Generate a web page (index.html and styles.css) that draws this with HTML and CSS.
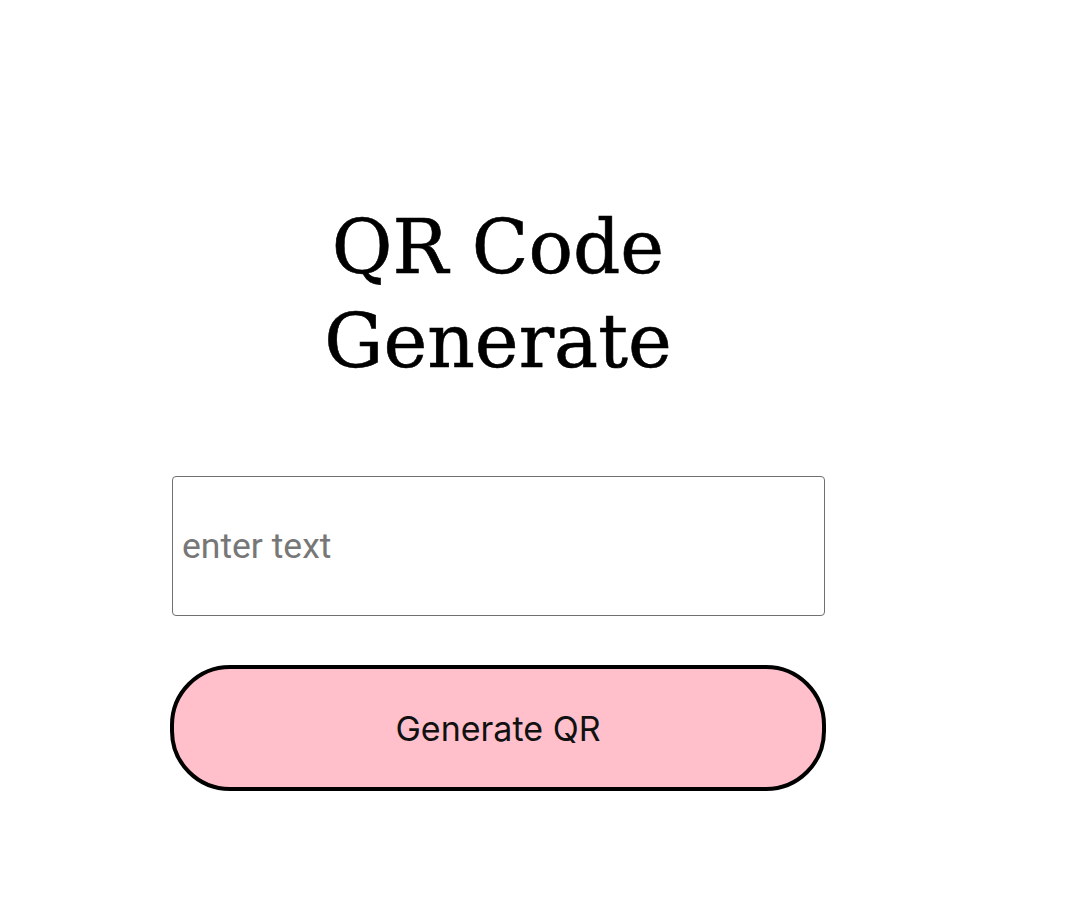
FILE: index.html
```html
<!DOCTYPE html>
<html lang="en">
<head>
<meta charset="utf-8">
<title>QR Code Generate</title>
<link rel="stylesheet" href="styles.css">
</head>
<body>
<main class="app">
  <h1 class="title">QR Code<br>Generate</h1>
  <input class="text-input" type="text" placeholder="enter text">
  <button class="gen-btn" type="button">Generate QR</button>
</main>
</body>
</html>
```

FILE: styles.css
```css
html, body {
  margin: 0;
  padding: 0;
  background: #ffffff;
}

.app {
  width: 656px;
  margin-left: 170px;
  padding-top: 200px;
  display: flex;
  flex-direction: column;
  align-items: center;
}

.title {
  margin: 0;
  font-family: "DejaVu Serif", serif;
  font-weight: 400;
  font-size: 74px;
  line-height: 94px;
  text-align: center;
  color: #000;
  -webkit-text-stroke: 0.6px #000;
}

.text-input {
  box-sizing: border-box;
  width: 653px;
  height: 140px;
  margin: 88px 0 0 2px;
  align-self: flex-start;
  border: 1.5px solid #707070;
  border-radius: 4px;
  padding: 0 9px;
  font-family: "Roboto", "Liberation Sans", sans-serif;
  font-size: 35.5px;
  color: #000;
  background: #fff;
  outline: none;
}

.text-input::placeholder {
  color: #777777;
}

.gen-btn {
  box-sizing: border-box;
  width: 656px;
  height: 126px;
  margin-top: 49px;
  border: 4px solid #000;
  border-radius: 60px;
  background: #ffc0cb;
  font-family: "Inter", "Roboto", sans-serif;
  font-size: 34px;
  color: #111;
  cursor: pointer;
}
```
